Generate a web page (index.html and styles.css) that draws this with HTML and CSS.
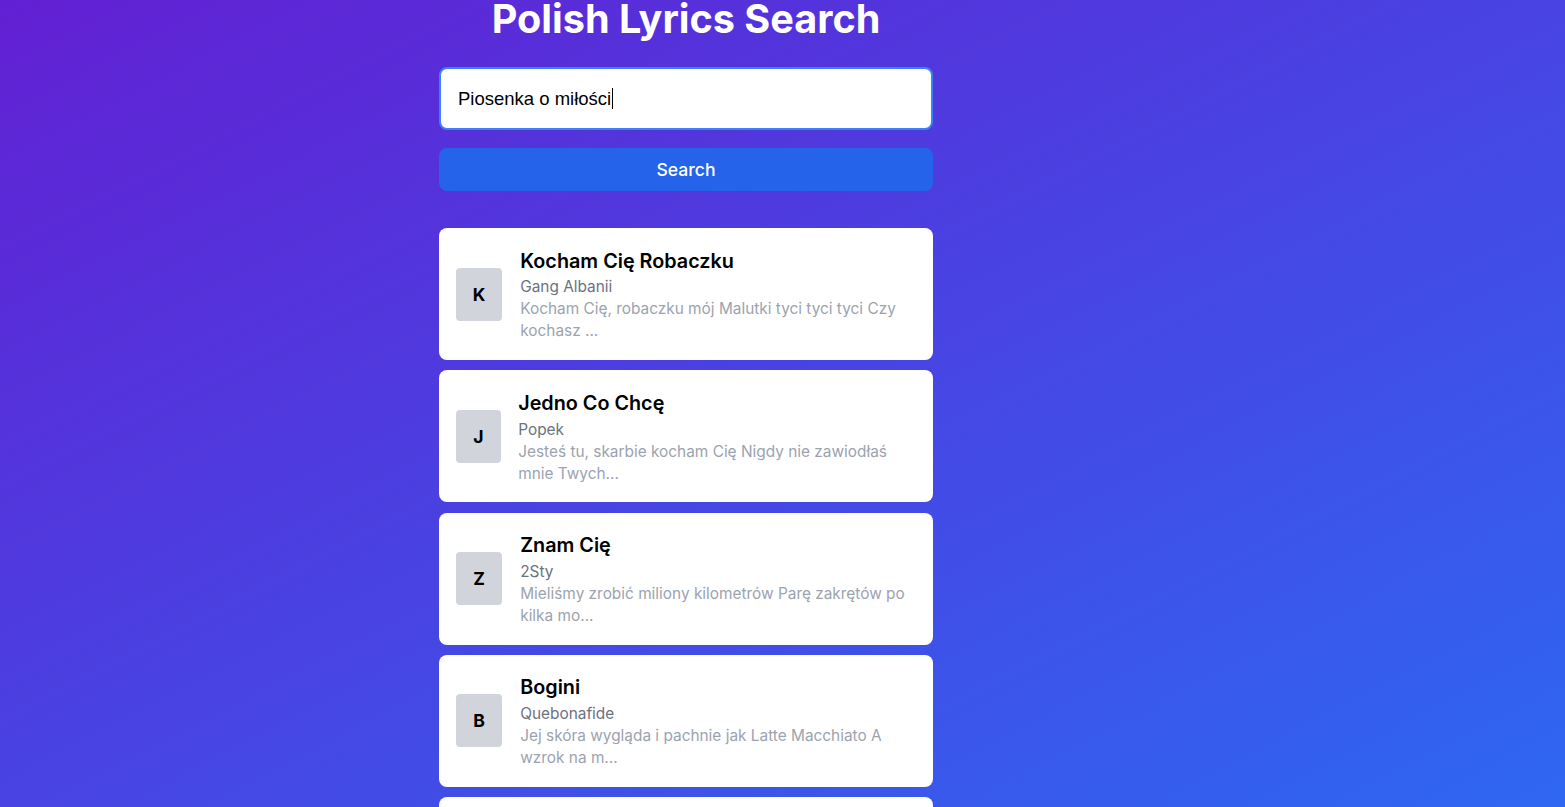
FILE: index.html
```html
<!DOCTYPE html>
<html lang="pl">
<head>
<meta charset="utf-8">
<title>Polish Lyrics Search</title>
<link rel="stylesheet" href="styles.css">
</head>
<body>
<main class="page">
  <h1 class="title">Polish Lyrics Search</h1>
  <form class="search">
    <div class="input-box"><span class="input-text">Piosenka o miłości</span><span class="caret"></span></div>
    <button type="button" class="search-btn">Search</button>
  </form>
  <section class="results">
    <article class="card">
      <div class="avatar">K</div>
      <div class="info">
        <h2 class="song">Kocham Cię Robaczku</h2>
        <p class="artist">Gang Albanii</p>
        <p class="snippet">Kocham Cię, robaczku mój Malutki tyci tyci tyci Czy kochasz ...</p>
      </div>
    </article>
    <article class="card">
      <div class="avatar avatar-narrow">J</div>
      <div class="info">
        <h2 class="song">Jedno Co Chcę</h2>
        <p class="artist">Popek</p>
        <p class="snippet">Jesteś tu, skarbie kocham Cię Nigdy nie zawiodłaś mnie Twych...</p>
      </div>
    </article>
    <article class="card">
      <div class="avatar">Z</div>
      <div class="info">
        <h2 class="song">Znam Cię</h2>
        <p class="artist">2Sty</p>
        <p class="snippet">Mieliśmy zrobić miliony kilometrów Parę zakrętów po kilka mo...</p>
      </div>
    </article>
    <article class="card">
      <div class="avatar">B</div>
      <div class="info">
        <h2 class="song">Bogini</h2>
        <p class="artist">Quebonafide</p>
        <p class="snippet">Jej skóra wygląda i pachnie jak Latte Macchiato A wzrok na m...</p>
      </div>
    </article>
    <article class="card card-partial"></article>
  </section>
</main>
</body>
</html>
```
FILE: styles.css
```css
* { box-sizing: border-box; }
html, body { margin: 0; height: 100%; overflow: hidden; }
body {
  background: linear-gradient(to bottom right, #6220d3, #2e67f2);
  font-family: Inter, "Noto Sans", sans-serif;
}
.page {
  width: 494px;
  margin-left: 439px;
}
.title {
  margin: -3.4px 0 0;
  font-size: 39.6px;
  line-height: 44px;
  font-weight: 700;
  color: #fff;
  text-align: center;
}
.search {
  margin-top: 26.4px;
  display: flex;
  flex-direction: column;
  gap: 18px;
}
.input-box {
  height: 63px;
  background: #fff;
  border: 2px solid #3b82f6;
  border-radius: 8px;
  padding: 0 17px;
  display: flex;
  align-items: center;
  font-family: "Liberation Sans", Arial, sans-serif;
  font-size: 18.5px;
  color: #000;
}
.caret {
  display: inline-block;
  width: 1px;
  height: 21px;
  background: #000;
  margin-left: 1px;
}
.search-btn {
  height: 43px;
  border: none;
  border-radius: 8px;
  background: #2563eb;
  color: #fff;
  font-family: Inter, sans-serif;
  font-size: 17.6px;
  font-weight: 500;
}
.results {
  margin-top: 37px;
  display: flex;
  flex-direction: column;
  gap: 10.25px;
}
.card {
  background: #fff;
  border-radius: 8px;
  height: 132px;
  padding: 17.6px 17.6px 17.6px 17px;
  display: flex;
  align-items: center;
  gap: 18.2px;
  flex-shrink: 0;
}
.avatar {
  width: 46px;
  height: 53px;
  flex-shrink: 0;
  background: #d1d5db;
  border-radius: 4px;
  display: flex;
  align-items: center;
  justify-content: center;
  font-weight: 700;
  font-size: 17.6px;
  color: #000;
}
.avatar-narrow { width: 45px; margin-right: -1px; }
.info { flex: 1; min-width: 0; }
.song {
  margin: 0;
  font-size: 19.8px;
  line-height: 30.8px;
  font-weight: 600;
  color: #000;
}
.artist {
  margin: 0;
  font-size: 15.4px;
  line-height: 22px;
  color: #6b7280;
}
.snippet {
  margin: 0;
  font-size: 15.4px;
  line-height: 22px;
  color: #9ca3af;
}
```
